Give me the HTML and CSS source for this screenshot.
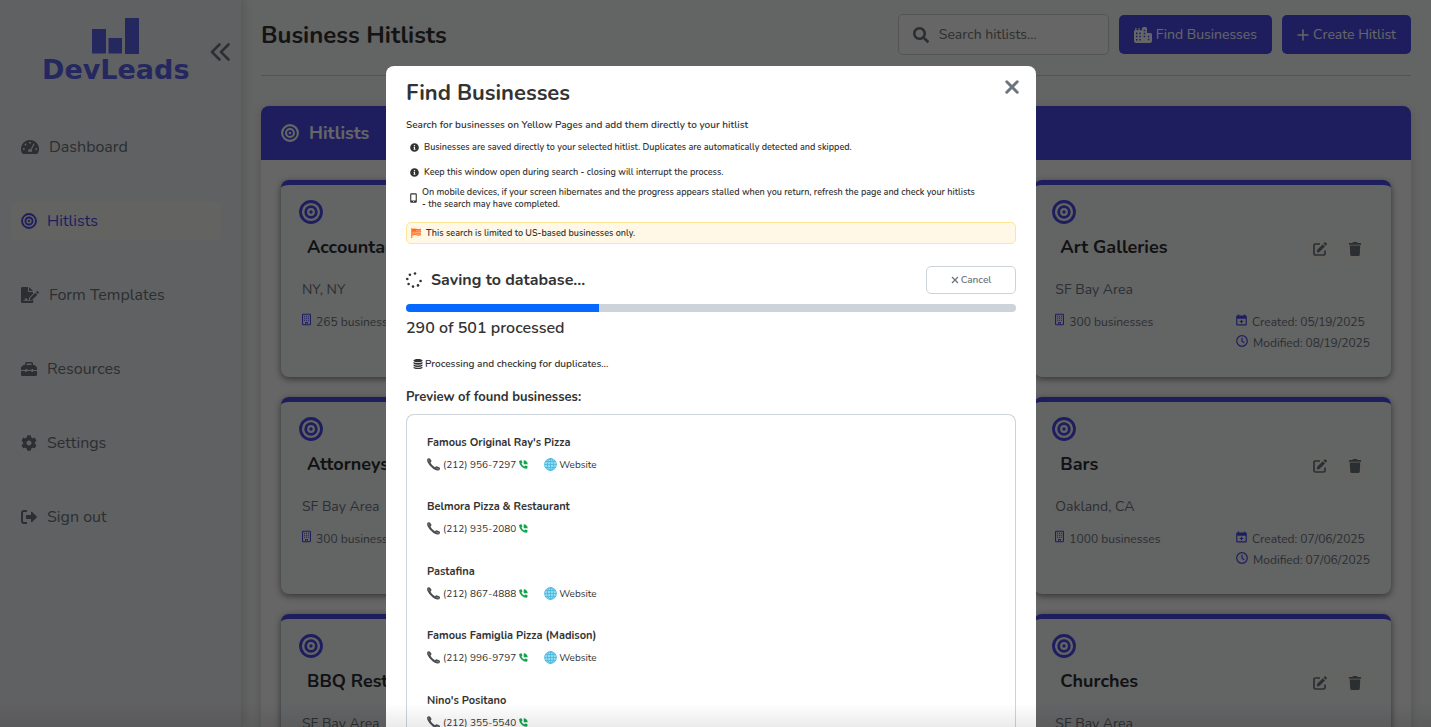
FILE: index.html
```html
<!DOCTYPE html>
<html lang="en">
<head>
<meta charset="utf-8">
<meta name="viewport" content="width=device-width, initial-scale=1">
<title>DevLeads - Business Hitlists</title>
<link rel="stylesheet" href="styles.css">
</head>
<body>
<svg class="sprite" aria-hidden="true">
  <symbol id="target" viewBox="0 0 24 24"><g fill="none" stroke="currentColor"><circle cx="12" cy="12" r="10.5" stroke-width="2.8"/><circle cx="12" cy="12" r="5.300" stroke-width="2.8"/></g><circle cx="12" cy="12" r="1.700" fill="currentColor"/></symbol>
  <symbol id="gauge" viewBox="0 0 18 14"><path fill="currentColor" fill-rule="evenodd" d="M9 0a9 9 0 0 1 7.700 13.600q-.3.400-.8.400H2.100q-.5 0-.8-.400A9 9 0 0 1 9 0zM9 1.800a1 1 0 1 0 0 2 1 1 0 0 0 0-2zM4.500 3.400a1 1 0 1 0 0 2 1 1 0 0 0 0-2zM2.800 8a1 1 0 1 0 0 2 1 1 0 0 0 0-2zM15.200 8a1 1 0 1 0 0 2 1 1 0 0 0 0-2zM12.400 3.700 9.600 9.200a2 2 0 0 0-2.400 2.600h3.700a2 2 0 0 0-.3-2.100l2.900-5.500q0-.9-1.100-.5z"/></symbol>
  <symbol id="sign-doc" viewBox="0 0 18 16"><path fill="currentColor" d="M1.200 0H7v4.200q0 .8.8.8H12v1.700L8.300 10.400 7.700 13H6.500l-.8-1.500q-.7-.8-1.400 0L3.700 13H2.500v.8h6.700l3-.8.100 2q-.2 1-1.200 1H1.200Q0 16 0 14.800V1.200Q0 0 1.200 0zM8 0l4 4H8zM9.300 10.800l5-5 2 2-5 5-2.400.5zM15 5.100l.8-.8q.6-.5 1.200 0l.7.7q.5.6 0 1.200l-.8.8z"/></symbol>
  <symbol id="toolbox" viewBox="0 0 16 14"><path fill="currentColor" fill-rule="evenodd" d="M4 3V1.500Q4 0 5.500 0h5Q12 0 12 1.500V3h1.200q.5 0 .9.400l1.400 1.400q.5.400.5 1V8h-4V7h-1.500v1h-4V7H4.500v1H0V5.800q0-.6.500-1l1.400-1.400q.4-.4.900-.4zM5.500 3h5V1.500h-5zM0 9h4v1h1.500V9h5v1H12V9h4v4q0 1-1 1H1q-1 0-1-1z"/></symbol>
  <symbol id="cog" viewBox="0 0 512 512"><path fill="currentColor" d="M487.400 315.700l-42.600-24.600c4.300-23.200 4.300-47 0-70.200l42.600-24.600c4.900-2.800 7.100-8.600 5.500-14-11.100-35.600-30-67.800-54.700-94.600-3.800-4.100-10-5.100-14.800-2.300L380.800 110c-17.900-15.400-38.500-27.300-60.800-35.100V25.800c0-5.600-3.900-10.500-9.400-11.700-36.700-8.200-74.300-7.800-109.200 0-5.500 1.200-9.400 6.100-9.400 11.700V75c-22.200 7.900-42.800 19.800-60.800 35.100L88.700 85.500c-4.900-2.800-11-1.900-14.800 2.300-24.700 26.700-43.600 58.900-54.700 94.600-1.700 5.400.6 11.200 5.500 14L67.300 221c-4.300 23.200-4.300 47 0 70.200l-42.600 24.600c-4.900 2.800-7.100 8.600-5.500 14 11.100 35.600 30 67.800 54.700 94.600 3.800 4.100 10 5.100 14.800 2.300l42.600-24.600c17.900 15.400 38.500 27.300 60.800 35.100v49.200c0 5.600 3.900 10.500 9.400 11.700 36.700 8.200 74.300 7.800 109.200 0 5.500-1.200 9.400-6.100 9.400-11.700v-49.200c22.200-7.900 42.800-19.800 60.800-35.100l42.600 24.600c4.900 2.800 11 1.900 14.800-2.300 24.700-26.700 43.600-58.900 54.700-94.600 1.500-5.500-.7-11.300-5.600-14.100zM256 336c-44.100 0-80-35.900-80-80s35.900-80 80-80 80 35.900 80 80-35.900 80-80 80z"/></symbol>
  <symbol id="signout" viewBox="0 0 16 14"><path fill="none" stroke="currentColor" stroke-width="2" stroke-linecap="round" d="M5.200 1H3Q1 1 1 3v8q0 2 2 2h2.200"/><path fill="currentColor" d="M5.500 5H10V2.600q.2-1.200 1.200-.5l4.500 4.300q.5.600 0 1.200l-4.500 4.300q-1 .7-1.200-.5V9H5.500q-.6-.1-.6-.7V5.700q0-.6.600-.7z"/></symbol>
  <symbol id="chevrons" viewBox="0 0 20 18"><path fill="none" stroke="currentColor" stroke-width="2.600" stroke-linecap="round" stroke-linejoin="round" d="M9.500 1.500 2 9l7.500 7.500M18.500 1.500 11 9l7.500 7.500"/></symbol>
  <symbol id="search" viewBox="0 0 512 512"><path fill="currentColor" d="M505 442.700L405.300 343c-4.500-4.500-10.600-7-17-7H372c27.600-35.300 44-79.700 44-128C416 93.100 322.900 0 208 0S0 93.100 0 208s93.100 208 208 208c48.300 0 92.700-16.400 128-44v16.300c0 6.400 2.500 12.500 7 17l99.700 99.700c9.400 9.400 24.600 9.400 33.900 0l28.300-28.300c9.400-9.400 9.400-24.600.1-34zM208 336c-70.700 0-128-57.200-128-128 0-70.700 57.200-128 128-128 70.700 0 128 57.200 128 128 0 70.700-57.200 128-128 128z"/></symbol>
  <symbol id="city" viewBox="0 0 18 16"><path fill="currentColor" fill-rule="evenodd" d="M0 4q0-.8.900-.8h.4V1h1.200v2.200h2V1h1.200v2.200H8V1.500Q8 0 9.500 0h2Q13 0 13 1.500V6h3.500Q18 6 18 7.500V14q0 2-2 2H2q-2 0-2-2zM2 5.500v1.700h1.500V5.500zm3.300 0v1.700h1.500V5.500zM2 8.700v1.600h1.500V8.700zm3.300 0v1.600h1.500V8.700zM2 12v1.600h1.500V12zm3.300 0v1.600h1.500V12zM9.700 2.800v1.500h1.500V2.800zm0 3v1.500h1.500V5.800zm0 3v1.500h1.500V8.800zm4.200 0v1.500h1.500V8.800zm0 3v1.500h1.500v-1.500z"/></symbol>
  <symbol id="building" viewBox="0 0 10 13"><path fill="none" stroke="currentColor" stroke-width="1.200" d="M1.500.6h7q.9 0 .9.900v10q0 .9-.9.900h-7q-.9 0-.9-.9v-10q0-.9.9-.9z"/><path fill="currentColor" d="M2.300 2.300h1.200v1.200H2.300zm2.100 0h1.200v1.200H4.400zm2.100 0h1.200v1.200H6.500zM2.300 4.500h1.200v1.200H2.300zm2.100 0h1.200v1.200H4.400zm2.100 0h1.200v1.200H6.500zM2.300 6.700h1.200v1.200H2.300zm2.100 0h1.200v1.200H4.400zm2.100 0h1.200v1.200H6.500zM3.500 9.300h3v3h-1v-2h-1v2h-1z"/></symbol>
  <symbol id="calendar" viewBox="0 0 12 12"><path fill="currentColor" fill-rule="evenodd" d="M2 0h1.400v1h5.200V0H10v1h.6q1.200 0 1.200 1.200v8.600q0 1.200-1.200 1.200H1.400Q.2 12 .2 10.800V2.200Q.2 1 1.400 1H2zM1.500 4.500v6.200h9V4.500zM5.400 5.600h1.200V7H8v1.200H6.600v1.400H5.400V8.200H4V7h1.400z"/></symbol>
  <symbol id="clock" viewBox="0 0 12 12"><g fill="none" stroke="currentColor" stroke-width="1.200" stroke-linecap="round"><circle cx="6" cy="6" r="5.300"/><path d="M6 3v3.200l2 1.300"/></g></symbol>
  <symbol id="edit" viewBox="0 0 14 14"><path fill="none" stroke="currentColor" stroke-width="1.700" d="M7 2H2.300Q1 2 1 3.300v8.400Q1 13 2.300 13h8.400q1.300 0 1.300-1.300V8.500"/><path fill="currentColor" d="M4.200 7.800 9.800 2.200l2.200 2.200-5.600 5.600-2.500.4zM10.500 1.500l1-1q.6-.6 1.200 0l1 1q.5.600 0 1.200l-1 1z"/></symbol>
  <symbol id="trash" viewBox="0 0 448 512"><path fill="currentColor" d="M432 32H312l-9.400-18.700A24 24 0 0 0 281.100 0H166.800a23.720 23.720 0 0 0-21.400 13.300L136 32H16A16 16 0 0 0 0 48v32a16 16 0 0 0 16 16h416a16 16 0 0 0 16-16V48a16 16 0 0 0-16-16zM32 128l18 336q4 48 50 48h248q46 0 50-48l18-336z"/></symbol>
  <symbol id="info" viewBox="0 0 512 512"><path fill="currentColor" d="M256 8C119 8 8 119 8 256c0 137 111 248 248 248s248-111 248-248C504 119 393 8 256 8zm0 110c23.200 0 42 18.800 42 42s-18.800 42-42 42-42-18.800-42-42 18.800-42 42-42zm56 254c0 6.600-5.400 12-12 12h-88c-6.600 0-12-5.400-12-12v-24c0-6.600 5.400-12 12-12h12v-64h-12c-6.600 0-12-5.400-12-12v-24c0-6.600 5.400-12 12-12h64c6.600 0 12 5.400 12 12v100h12c6.600 0 12 5.400 12 12v24z"/></symbol>
  <symbol id="mobile" viewBox="0 0 7 10"><path fill="currentColor" fill-rule="evenodd" d="M1.200.3h4.600q1 0 1 1v7.400q0 1-1 1H1.200q-1 0-1-1V1.300q0-1 1-1zM1.300 1.500v6h4.400v-6zM3 8.200v.7h1v-.7z"/></symbol>
  <symbol id="flag" viewBox="0 0 10 10"><path fill="#ff6b1a" d="M.3 0h1v.9q1.900-.8 3.900-.1 2.200.8 4.800 0v6.500q-2.600.8-4.800 0-2-.7-3.900.1V10h-1z"/><path stroke="#fff8e6" stroke-width=".5" fill="none" d="M5 2.700q2.200.8 5 0M1.300 4.400q2-.7 3.900 0t4.800 0M1.300 6q2-.7 3.900 0t4.800 0"/></symbol>
  <symbol id="spinner" viewBox="0 0 16 16"><g fill="currentColor"><circle cx="9" cy="1.500" r="1.300"/><circle cx="3.900" cy="2.700" r="1.300"/><circle cx="1.300" cy="7" r="1.300"/><circle cx="2.600" cy="12" r="1.300"/><circle cx="7" cy="14.600" r="1.300"/><circle cx="12" cy="13.400" r="1.300"/><circle cx="14.600" cy="9" r="1.300"/></g></symbol>
  <symbol id="times" viewBox="0 0 14 14"><path stroke="currentColor" stroke-width="3" stroke-linecap="round" d="m1.800 1.800 10.400 10.400M12.200 1.800 1.800 12.200"/></symbol>
  <symbol id="database" viewBox="0 0 10 10"><path fill="currentColor" d="M.5 1.600C.5.700 2.500 0 5 0s4.500.7 4.500 1.600v.3Q8.500 3.200 5 3.200T.5 1.900zM.5 2.900Q2 3.900 5 3.900t4.500-1v1.600Q8.500 5.800 5 5.800T.5 4.500zM.5 5.500Q2 6.500 5 6.500t4.500-1v1.300Q8.500 8 5 8T.5 6.800zM.5 7.700Q2 8.700 5 8.700t4.500-1v.7Q9 10 5 10T.5 8.400z"/></symbol>
  <symbol id="handset" viewBox="0 0 13 13"><path fill="#4a4f52" d="M.2 1.200Q1-.1 2.400.3q1.300.7 1.900 2.300.4 1.100-.5 1.600l-.3.500q1.300 2.700 4.400 4.500l.6-.5q.7-.7 1.700-.3l2 .9q1 .5.800 1.600-.6 1.500-2.200 1.700-2.200.2-5-2.100Q1.900 7.500.5 4-.1 2.300.2 1.200z"/><path stroke="#8b9093" stroke-width=".7" fill="none" d="m1.100 1.500 1.400 2.100M9.100 10.500l3 .3"/></symbol>
  <symbol id="call" viewBox="0 0 9 9"><path fill="#12a44c" d="M.6.700 2 .200q.5 0 .7.400l.7 1.700q0 .4-.3.700l-.7.600q.9 2 2.800 2.900l.7-.8q.3-.3.700-.2l1.700.7q.4.200.3.700L8.200 8.300q-.1.500-.7.500Q4.700 8.700 2.400 6.500 0 4.100.1 1.300q.1-.4.500-.6zM4.700.3q3.600.3 4 4H4.700z"/></symbol>
  <symbol id="globe" viewBox="0 0 13 13"><circle cx="6.500" cy="6.500" r="6.200" fill="#8fdcf7"/><g fill="none" stroke="#3aa9d3" stroke-width=".6"><circle cx="6.500" cy="6.500" r="5.900"/><ellipse cx="6.500" cy="6.500" rx="3" ry="5.900"/><path d="M6.500.6v11.800M.6 6.500h11.800M1.500 3.500h10M1.500 9.500h10"/></g></symbol>
</svg>

<div class="app">
  <aside class="sidebar">
    <div class="brand">
      <a class="logo" href="#">
        <svg class="logo-bars" viewBox="0 0 47 37" aria-hidden="true"><path fill="currentColor" d="M0 12h14V36.500H0zM16.500 21h13.500V36.500H16.500zM33 1h14v36H33z"/></svg>
        <span class="logo-name">DevLeads</span>
      </a>
      <button class="collapse" type="button" aria-label="Collapse sidebar"><svg><use href="#chevrons"/></svg></button>
    </div>
    <nav class="nav">
      <a href="#"><svg class="wide"><use href="#gauge"/></svg>Dashboard</a>
      <a class="active" href="#"><svg><use href="#target"/></svg>Hitlists</a>
      <a href="#"><svg class="wide"><use href="#sign-doc"/></svg>Form Templates</a>
      <a href="#"><svg><use href="#toolbox"/></svg>Resources</a>
      <a href="#"><svg><use href="#cog"/></svg>Settings</a>
      <a href="#"><svg><use href="#signout"/></svg>Sign out</a>
    </nav>
  </aside>

  <main class="main">
    <header class="topbar">
      <h1>Business Hitlists</h1>
      <label class="search"><svg aria-hidden="true"><use href="#search"/></svg><input type="text" placeholder="Search hitlists..." aria-label="Search hitlists"></label>
      <button class="primary" type="button"><svg class="city"><use href="#city"/></svg>Find Businesses</button>
      <button class="primary" type="button"><svg class="plus" viewBox="0 0 12 12"><path stroke="currentColor" stroke-width="1.500" stroke-linecap="round" d="M6 1v10M1 6h10"/></svg>Create Hitlist</button>
    </header>

    <section class="panel">
      <h2 class="panel-head"><svg><use href="#target"/></svg>Hitlists</h2>
      <div class="cards">
        <article class="card first">
          <svg class="mark"><use href="#target"/></svg>
          <div class="card-title"><h3>Accountants</h3></div>
          <p class="place">NY, NY</p>
          <div class="meta"><span><svg class="bld"><use href="#building"/></svg>265 businesses</span></div>
        </article>
        <article class="card last">
          <svg class="mark"><use href="#target"/></svg>
          <div class="card-title"><h3>Art Galleries</h3><button type="button" aria-label="Edit"><svg><use href="#edit"/></svg></button><button type="button" aria-label="Delete"><svg><use href="#trash"/></svg></button></div>
          <p class="place">SF Bay Area</p>
          <div class="meta"><span><svg class="bld"><use href="#building"/></svg>300 businesses</span><div class="dates"><span><svg class="cal"><use href="#calendar"/></svg>Created: 05/19/2025</span><span><svg><use href="#clock"/></svg>Modified: 08/19/2025</span></div></div>
        </article>
        <article class="card first">
          <svg class="mark"><use href="#target"/></svg>
          <div class="card-title"><h3>Attorneys</h3></div>
          <p class="place">SF Bay Area</p>
          <div class="meta"><span><svg class="bld"><use href="#building"/></svg>300 businesses</span></div>
        </article>
        <article class="card last">
          <svg class="mark"><use href="#target"/></svg>
          <div class="card-title"><h3>Bars</h3><button type="button" aria-label="Edit"><svg><use href="#edit"/></svg></button><button type="button" aria-label="Delete"><svg><use href="#trash"/></svg></button></div>
          <p class="place">Oakland, CA</p>
          <div class="meta"><span><svg class="bld"><use href="#building"/></svg>1000 businesses</span><div class="dates"><span><svg class="cal"><use href="#calendar"/></svg>Created: 07/06/2025</span><span><svg><use href="#clock"/></svg>Modified: 07/06/2025</span></div></div>
        </article>
        <article class="card first">
          <svg class="mark"><use href="#target"/></svg>
          <div class="card-title"><h3>BBQ Restaurants</h3></div>
          <p class="place">SF Bay Area</p>
        </article>
        <article class="card last">
          <svg class="mark"><use href="#target"/></svg>
          <div class="card-title"><h3>Churches</h3><button type="button" aria-label="Edit"><svg><use href="#edit"/></svg></button><button type="button" aria-label="Delete"><svg><use href="#trash"/></svg></button></div>
          <p class="place">SF Bay Area</p>
        </article>
      </div>
    </section>
  </main>
</div>

<div class="overlay">
  <div class="modal" role="dialog" aria-labelledby="modal-title">
    <header class="modal-head">
      <h2 id="modal-title">Find Businesses</h2>
      <button class="close" type="button" aria-label="Close"><svg><use href="#times"/></svg></button>
    </header>
    <p class="lead">Search for businesses on Yellow Pages and add them directly to your hitlist</p>
    <ul class="notes">
      <li><svg><use href="#info"/></svg>Businesses are saved directly to your selected hitlist. Duplicates are automatically detected and skipped.</li>
      <li><svg><use href="#info"/></svg>Keep this window open during search - closing will interrupt the process.</li>
      <li class="phone"><svg><use href="#mobile"/></svg><span>On mobile devices, if your screen hibernates and the progress appears stalled when you return, refresh the page and check your hitlists <span class="keep">- the search may have completed.</span></span></li>
    </ul>
    <p class="alert"><svg><use href="#flag"/></svg>This search is limited to US-based businesses only.</p>

    <div class="status">
      <svg><use href="#spinner"/></svg>
      <strong>Saving to database...</strong>
      <button class="cancel" type="button"><svg viewBox="0 0 8 8"><path stroke="currentColor" stroke-width="1.300" d="m1 1 6 6M7 1 1 7"/></svg>Cancel</button>
    </div>
    <div class="progress" role="progressbar" aria-valuemin="0" aria-valuemax="501" aria-valuenow="290"><div class="bar" style="width: 31.6%"></div></div>
    <p class="count">290 of 501 processed</p>
    <p class="step"><svg><use href="#database"/></svg>Processing and checking for duplicates...</p>

    <h3 class="preview-title">Preview of found businesses:</h3>
    <ul class="preview">
      <li><strong>Famous Original Ray's Pizza</strong><div><svg class="handset"><use href="#handset"/></svg>(212) 956-7297<svg class="call"><use href="#call"/></svg><svg class="globe"><use href="#globe"/></svg>Website</div></li>
      <li><strong>Belmora Pizza &amp; Restaurant</strong><div><svg class="handset"><use href="#handset"/></svg>(212) 935-2080<svg class="call"><use href="#call"/></svg></div></li>
      <li><strong>Pastafina</strong><div><svg class="handset"><use href="#handset"/></svg>(212) 867-4888<svg class="call"><use href="#call"/></svg><svg class="globe"><use href="#globe"/></svg>Website</div></li>
      <li><strong>Famous Famiglia Pizza (Madison)</strong><div><svg class="handset"><use href="#handset"/></svg>(212) 996-9797<svg class="call"><use href="#call"/></svg><svg class="globe"><use href="#globe"/></svg>Website</div></li>
      <li><strong>Nino's Positano</strong><div><svg class="handset"><use href="#handset"/></svg>(212) 355-5540<svg class="call"><use href="#call"/></svg></div></li>
    </ul>
  </div>
</div>
</body>
</html>
```
FILE: styles.css
```css
:root { --primary: #4b4bee; --text: #333; --muted: #6c757d; --line: #ccd3da; }
* { box-sizing: border-box; }
html, body { height: 100%; overflow: hidden; }
body { margin: 0; font-family: Nunito, Lato, sans-serif; color: var(--text); background: #f8f9fa; }
h1, h2, h3, p, ul { margin: 0; padding: 0; }
ul { list-style: none; }
a { color: inherit; text-decoration: none; }
button { font: inherit; color: inherit; border: 0; background: none; padding: 0; cursor: pointer; }
svg { display: block; flex: none; }
.sprite { position: absolute; width: 0; height: 0; }

.app { display: flex; height: 100%; }
.sidebar { flex: none; width: 241px; background: #f1f3f6; box-shadow: 2px 0 10px rgba(0,0,0,.15); }
.brand { display: flex; align-items: center; justify-content: space-between; padding: 17px 11px 0 42px; }
.logo { display: flex; flex-direction: column; align-items: center; color: #5e64ee; }
.logo-bars { width: 47px; height: 37px; }
.logo-name { font: bold 27px/32px "DejaVu Sans", sans-serif; }
.collapse { color: #6f787f; }
.collapse svg { width: 20px; height: 18px; }
.nav { display: flex; flex-direction: column; gap: 36px; padding: 42px 20px 0 11px; }
.nav a { display: flex; align-items: center; gap: 10px; height: 38px; padding: 0 10px; border-radius: 5px; font-size: 16px; color: var(--muted); }
.nav svg { width: 16px; height: 16px; }
.nav svg.wide { width: 18px; }
.nav .active { color: var(--primary); background: #f8faf6; }

.main { flex: 1; padding: 0 20px; }
.topbar { display: flex; align-items: center; gap: 10px; height: 76px; padding: 0 0 6px; border-bottom: 1px solid #cfd2d6; }
.topbar h1 { flex: 1; padding-top: 1px; font-size: 24px; line-height: 32px; font-weight: 700; }
.search { display: flex; align-items: center; gap: 10px; width: 211px; height: 41px; padding: 0 14px; border: 1px solid #ccd1d8; border-radius: 5px; background: #fff; }
.search svg { width: 16px; height: 16px; color: var(--muted); }
.search input { flex: 1; min-width: 0; border: 0; outline: 0; padding: 0; background: none; font: 14px/20px Nunito, Lato, sans-serif; }
.search input::placeholder { color: #757575; opacity: 1; }
.primary { display: flex; align-items: center; gap: 4px; height: 39px; padding: 0 15px; border-radius: 5px; color: #fff; background: var(--primary); font-size: 14px; }
.city { width: 18px; height: 16px; }
.plus { width: 12px; height: 12px; }

.panel { margin-top: 30px; border-radius: 8px; background: #fff; box-shadow: 0 2px 10px rgba(0,0,0,.15); }
.panel-head { display: flex; align-items: center; gap: 10px; height: 54px; padding: 0 20px; border-radius: 8px 8px 0 0; color: #fff; background: var(--primary); font-size: 18px; }
.panel-head svg { width: 18px; height: 18px; }
.cards { display: grid; grid-template-columns: repeat(3, 1fr); gap: 20px; padding: 20px; }
.first { grid-column: 1; }
.last { grid-column: 3; }
.card { min-height: 197px; padding: 15px 18px 0; border-top: 5px solid var(--primary); border-radius: 8px; background: #f8f9fb; box-shadow: 0 2px 7px rgba(0,0,0,.5); }
.mark { width: 24px; height: 24px; color: var(--primary); }
.card-title { display: flex; align-items: center; gap: 5px; height: 36px; margin-top: 5px; padding: 0 3px 0 8px; }
.card-title h3 { flex: 1; font-size: 18px; line-height: 24px; color: #2c2e30; }
.card-title button { display: grid; place-items: center; width: 30px; height: 30px; margin-top: 3px; border-radius: 50%; color: var(--muted); background: #f9faf7; }
.card-title svg { width: 14px; height: 14px; }
.place { margin-top: 15px; padding: 0 3px; font-size: 14px; line-height: 20px; color: var(--muted); }
.meta { display: flex; justify-content: space-between; margin-top: 12px; padding: 0 3px; font-size: 12px; line-height: 21px; color: var(--muted); }
.meta span { display: flex; gap: 5px; }
.meta svg { width: 12px; height: 12px; margin-top: 2px; color: var(--primary); }
.meta svg.cal { width: 11px; }
.meta svg.bld { width: 9px; height: 13px; margin-top: 1px; }

.overlay { position: fixed; inset: 0; display: flex; justify-content: center; padding: 66px 9px 0 0; background: rgba(0,0,0,.6); overflow: hidden; }
.overlay::after { content: ""; position: absolute; inset: auto 0 0; height: 24px; background: linear-gradient(transparent, rgba(0,0,0,.08)); pointer-events: none; }
.modal { width: 650px; flex: none; padding: 8px 20px 0; border-radius: 8px 8px 0 0; background: #fff; }
.modal-head { display: flex; justify-content: space-between; }
.modal-head h2 { font-size: 22px; line-height: 38px; }
.close { width: 14px; height: 14px; margin: 6px -3px 0 0; color: var(--muted); }
.close svg { width: 14px; height: 14px; }
.lead { margin-top: 5px; font-size: 10px; line-height: 16px; font-weight: 600; }
.notes { padding: 4px 4px 0; font-size: 9px; line-height: 12px; font-weight: 600; }
.notes li { display: flex; align-items: center; gap: 5px; height: 20px; margin-bottom: 5px; }
.notes svg { width: 9px; height: 9px; }
.notes .phone { height: 22px; margin-bottom: 0; }
.notes .phone svg { width: 7px; height: 10px; }
.keep { white-space: nowrap; }
.alert { display: flex; align-items: center; gap: 5px; height: 22px; margin-top: 13px; padding: 0 4px; border: 1px solid #ffe594; border-radius: 5px; background: #fff8e6; font-size: 9px; font-weight: 600; }
.alert svg { width: 10px; height: 10px; }
.status { display: flex; align-items: center; gap: 9px; margin-top: 22px; font-size: 16px; }
.status > svg { width: 16px; height: 16px; }
.status strong { flex: 1; }
.cancel { display: flex; align-items: center; justify-content: center; gap: 2px; width: 90px; height: 28px; border: 1px solid var(--line); border-radius: 5px; color: var(--muted); font-size: 10px; font-weight: 600; }
.cancel svg { width: 8px; height: 8px; }
.progress { height: 8px; margin-top: 10px; border-radius: 4px; background: var(--line); overflow: hidden; }
.bar { height: 100%; background: #0569ff; }
.count { margin-top: 4px; font-size: 16px; line-height: 24px; font-weight: 600; }
.step { display: flex; align-items: center; gap: 2px; margin-top: 16px; padding-left: 7px; font-size: 10px; line-height: 16px; font-weight: 600; }
.step svg { width: 10px; height: 10px; }
.preview-title { margin-top: 16px; font-size: 13px; line-height: 18px; }
.preview { margin-top: 8px; padding: 18px 20px 0; border: 1px solid var(--line); border-bottom: 0; border-radius: 8px 8px 0 0; }
.preview li { height: 44px; margin-bottom: 20px; font-size: 10px; }
.preview li:nth-child(even) { margin-bottom: 21px; }
.preview strong { display: block; font-size: 11px; line-height: 20px; }
.preview div { display: flex; align-items: center; line-height: 24px; }
.preview svg { margin-bottom: 2px; }
.handset { width: 13px; height: 13px; margin-right: 3px; }
.call { width: 9px; height: 9px; margin-left: 3px; }
.globe { width: 13px; height: 13px; margin-left: 16px; margin-right: 2px; }
```
